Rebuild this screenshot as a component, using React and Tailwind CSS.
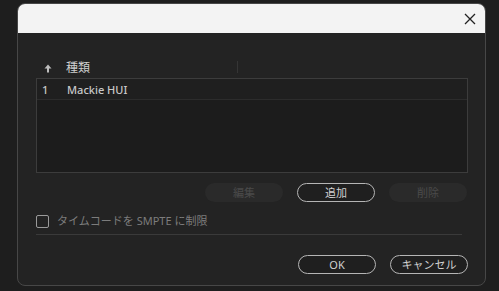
import React from "react";

const jp = { fontFamily: '"Noto Sans", "Noto Sans CJK JP", sans-serif' };

function Btn({ children, disabled, className = "" }) {
  return (
    <div
      className={
        "w-[78px] h-[19px] rounded-full flex items-center justify-center text-[11px] leading-none " +
        (disabled
          ? "bg-[#2a2a2a] text-[#4a4a4a]"
          : "border border-[#b5b5b5] text-[#d0d0d0] bg-[#1f1f1f]") +
        " " +
        className
      }
      style={jp}
    >
      {children}
    </div>
  );
}

export default function App() {
  return (
    <div className="w-[499px] h-[291px] bg-[#1e1e1e] overflow-hidden pt-[3px] pl-[17px]" style={jp}>
      <div className="w-[469px] h-[283px] rounded-[8px] border border-[#474747] bg-[#232323] flex flex-col overflow-hidden">
        <div className="h-[29px] bg-[#f3f3f3] flex items-center justify-end pr-[8px] shrink-0">
          <svg width="14" height="14" viewBox="0 0 14 14">
            <path d="M2 2 L12 12 M12 2 L2 12" stroke="#222" strokeWidth="1.3" fill="none" />
          </svg>
        </div>
        <div className="flex flex-col pl-[18px] pr-[17px] pt-[25px]">
          <div className="h-[20px] flex items-center text-[12px] text-[#cfcfcf] relative">
            <svg width="8" height="9" viewBox="0 0 8 9" className="ml-[8px]">
              <path d="M4 0.5 L7.5 4.5 L5 4.5 L5 8.5 L3 8.5 L3 4.5 L0.5 4.5 Z" fill="#bdbdbd" />
            </svg>
            <span className="ml-[14px]">種類</span>
            <div className="absolute left-[201px] top-[3px] w-px h-[12px] bg-[#353535]" />
          </div>
          <div className="h-[95px] border border-[#3c3c3c] bg-[#1c1c1c]">
            <div className="h-[21px] bg-[#1f1f1f] border-b border-[#2c2c2c] flex items-center pt-[2px] text-[11px] text-[#c8c8c8] font-medium">
              <span className="ml-[5px] w-[25px]">1</span>
              <span>Mackie HUI</span>
            </div>
          </div>
          <div className="mt-[10px] flex justify-end gap-[14px] pr-[1px]">
            <Btn disabled>編集</Btn>
            <Btn>追加</Btn>
            <Btn disabled>削除</Btn>
          </div>
          <div className="mt-[12px] flex items-center h-[14px]">
            <div className="w-[13px] h-[13px] border-[1.5px] border-[#9a9a9a] rounded-[2px]" />
            <span className="ml-[8px] text-[11px] text-[#7c7c7c]">タイムコードを SMPTE に制限</span>
          </div>
          <div className="mt-[6px] h-px bg-[#3a3a3a] mr-[6px]" />
          <div className="mt-[20px] flex justify-end gap-[14px]">
            <Btn>OK</Btn>
            <Btn>キャンセル</Btn>
          </div>
        </div>
      </div>
    </div>
  );
}
